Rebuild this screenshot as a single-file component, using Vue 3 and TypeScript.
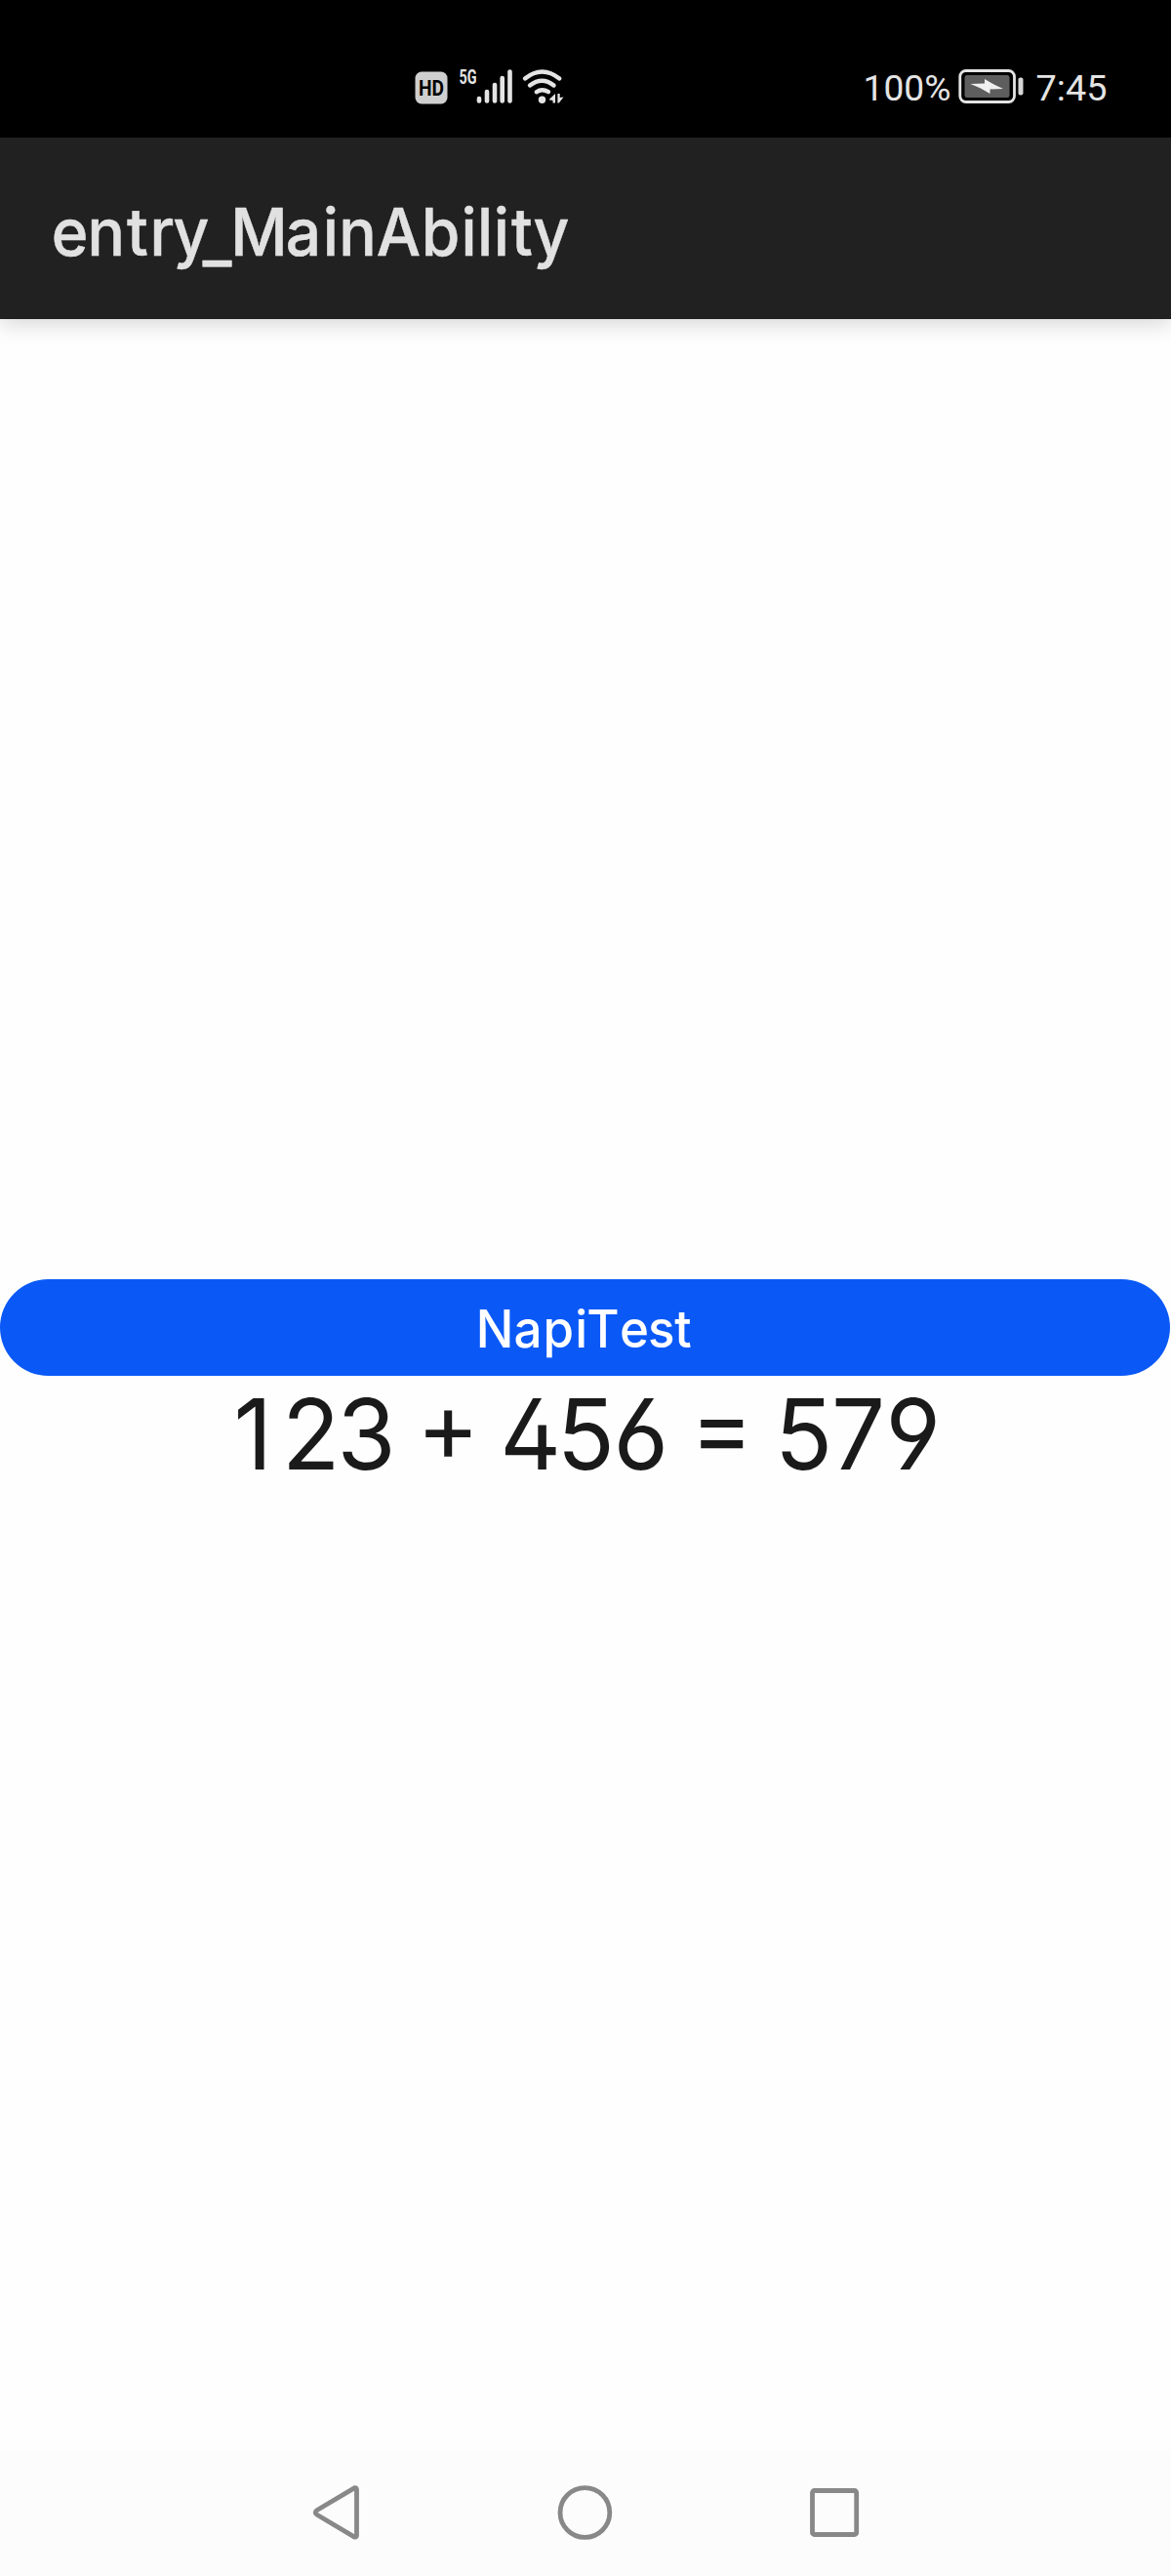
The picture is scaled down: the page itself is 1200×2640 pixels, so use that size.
<script setup lang="ts">
interface Bar {
  x: number
  y: number
}

const bars: Bar[] = [
  { x: 81, y: 51 },
  { x: 89, y: 44 },
  { x: 97, y: 37 },
  { x: 104.7, y: 30 },
  { x: 112.5, y: 23.5 },
]

const a = 123
const b = 456
const result = `${a} + ${b} = ${a + b}`

// Glyph centres, converted into the horizontally scaled text space.
const track = (centers: number[], scale: number): string =>
  centers.map((c) => (c / scale).toFixed(2)).join(' ')

// One baseline per character; the listed characters are shifted vertically.
const baselines = (text: string, base: number, shift: Record<string, number>): string =>
  [...text].map((ch) => base + (shift[ch] ?? 0)).join(' ')

const title = 'entry_MainAbility'
const titleX = track(
  [71.6, 108.7, 141, 166, 196, 222.5, 265.5, 311, 338.7, 366.5, 408.5, 451.5, 480.5, 497, 513.7, 535, 565],
  0.95,
)
const titleY = baselines(title, 262.3, { _: 4.5 })
const labelX = track([507, 541, 572.3, 595.7, 617.8, 650, 677.7, 700], 0.96)
const resultX = track(
  [259.3, 318.7, 375.5, 417, 459.2, 501, 543.6, 600.3, 656.7, 698, 739.7, 781, 823.6, 879.5, 935.7],
  0.97,
)
const resultY = baselines(result, 1506, { '+': -7.5, '=': -7.5 })
</script>

<template>
  <div class="screen">
    <header class="status">
      <svg width="190" height="80" viewBox="0 0 190 80">
        <rect x="15.5" y="23.5" width="33" height="33" rx="6.5" fill="#cfcfcf" />
        <text class="hd" x="19" y="48.2" textLength="26" lengthAdjust="spacingAndGlyphs">HD</text>
        <text class="fiveg" x="60.5" y="36.3" textLength="18" lengthAdjust="spacingAndGlyphs">5G</text>
        <rect
          v-for="bar in bars"
          :key="bar.x"
          :x="bar.x - 2.3"
          :y="bar.y - 2.3"
          width="4.6"
          :height="58 - bar.y"
          rx="2.3"
          fill="#e4e4e4"
        />
        <g fill="none" stroke="#e4e4e4" stroke-width="4.4" stroke-linecap="round">
          <path d="M128 30.5Q145.5 16.5 163.3 30.5" />
          <path d="M133 37.5Q145.5 27.8 157.5 37.5" />
          <path d="M139.8 44.2Q145.5 40.2 152 44.2" />
        </g>
        <circle cx="145.5" cy="52.3" r="3.7" fill="#e4e4e4" />
        <path d="M159 46V55.5H156.5V53L152.5 52.2Z" fill="#e4e4e4" />
        <path d="M161.4 46V55.5H162.8L167.5 49.6L163.7 50V46Z" fill="#e4e4e4" />
      </svg>
      <svg width="290" height="80" viewBox="0 0 290 80">
        <text class="clock" x="14.5" y="53" textLength="90" lengthAdjust="spacingAndGlyphs">100%</text>
        <rect x="113.8" y="22.5" width="55.7" height="32" rx="6" fill="none" stroke="#e4e4e4" stroke-width="2.8" />
        <rect x="118.5" y="27" width="46" height="23" rx="2.5" fill="#5e5e5e" />
        <path d="M139 31L148.5 36.5L158 41L144.5 41.5V46L135 40.5L124.5 36L139 35.5Z" fill="#f0f0f0" />
        <rect x="173.5" y="29.5" width="5" height="18" rx="2" fill="#d6d6d6" />
        <text class="clock" x="191.5" y="53" textLength="73" lengthAdjust="spacingAndGlyphs">7:45</text>
      </svg>
    </header>
    <div class="titlebar">
      <svg width="640" height="186" viewBox="0 141 640 186">
        <text class="title" :x="titleX" :y="titleY" transform="scale(0.95 1)">{{ title }}</text>
      </svg>
    </div>
    <main class="content">
      <button class="napi" type="button">
        <svg width="240" height="99" viewBox="480 1311 240 99">
          <text class="label" :x="labelX" y="1380.7" transform="scale(0.96 1)">NapiTest</text>
        </svg>
      </button>
      <svg class="sum" width="800" height="170" viewBox="200 1390 800 170">
        <text class="result" :x="resultX" :y="resultY" transform="scale(0.97 1)">{{ result }}</text>
      </svg>
    </main>
    <nav class="nav">
      <svg
        width="1200"
        height="130"
        viewBox="0 2510 1200 130"
        fill="none"
        stroke="#888"
        stroke-width="4.8"
        stroke-linejoin="round"
      >
        <path d="M363.5 2549.6Q365.5 2549.3 365.5 2551.5V2598.2Q365.5 2600.5 363.4 2600.1L324.5 2577Q322 2575 324.5 2572.8Z" />
        <circle cx="599.4" cy="2575" r="25.4" />
        <rect x="832.5" y="2552.5" width="45.2" height="45" rx="2" />
      </svg>
    </nav>
  </div>
</template>

<style>
body {
  margin: 0;
  background: #fff;
}
</style>

<style scoped>
.screen {
  width: 1200px;
  height: 2640px;
  display: flex;
  flex-direction: column;
  background: #fefefe;
  overflow: hidden;
}

svg {
  display: block;
  flex: none;
}

.status {
  box-sizing: border-box;
  height: 141px;
  padding: 50px 40px 0 410px;
  display: flex;
  justify-content: space-between;
  background: #000;
}

.hd {
  font: 700 22px Roboto, sans-serif;
  fill: #000;
}

.fiveg {
  font: 700 21px Roboto, sans-serif;
  fill: #e4e4e4;
}

.clock {
  font: 400 37.5px Roboto, sans-serif;
  fill: #e4e4e4;
}

.titlebar {
  height: 186px;
  background: #212121;
  box-shadow: 0 6px 20px rgba(0, 0, 0, 0.15);
}

.title {
  font: 500 67.4px Inter, sans-serif;
  fill: #e1e1e1;
  stroke: #e1e1e1;
  stroke-width: 0.5;
  text-anchor: middle;
}

.content {
  flex: 1;
  padding-top: 984px;
  display: flex;
  flex-direction: column;
  align-items: center;
}

.napi {
  width: 1199px;
  height: 99px;
  margin-right: 1px;
  padding: 0;
  border: 0;
  border-radius: 50px;
  background: #0a59f7;
  display: flex;
  justify-content: center;
}

.label {
  font: 500 53.2px Inter, sans-serif;
  fill: #fff;
  text-anchor: middle;
}

.sum {
  margin-top: -20px;
}

.result {
  font: 400 100.4px Inter, sans-serif;
  font-feature-settings: 'cv02', 'cv03', 'cv04';
  fill: #1a1a1a;
  text-anchor: middle;
}

.nav {
  height: 130px;
  background: #fcfcfc;
}
</style>
